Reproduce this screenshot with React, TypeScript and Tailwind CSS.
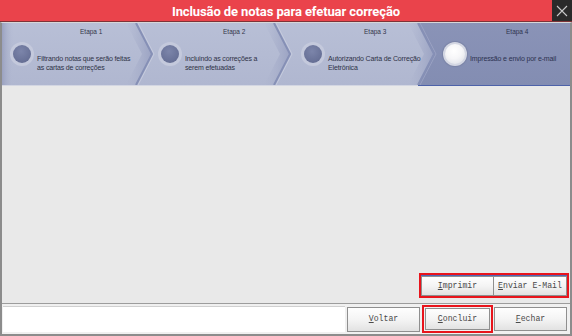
import React from "react";

const steps = [
  {
    label: "Etapa 1",
    lines: ["Filtrando notas que serão feitas", "as cartas de correções"],
    col: "w-[150px]",
    labelPad: "pl-[78px]",
    circlePad: "pl-[8px]",
    active: false,
  },
  {
    label: "Etapa 2",
    lines: ["Incluindo as correções a", "serem efetuadas"],
    col: "w-[138px]",
    labelPad: "pl-[71px]",
    circlePad: "pl-[6px]",
    active: false,
  },
  {
    label: "Etapa 3",
    lines: ["Autorizando Carta de Correção", "Eletrônica"],
    col: "w-[144px]",
    labelPad: "pl-[74px]",
    circlePad: "pl-[11px]",
    active: false,
  },
  {
    label: "Etapa 4",
    lines: ["Impressão e envio por e-mail"],
    col: "w-[136px]",
    labelPad: "pl-[72px]",
    circlePad: "pl-[9px]",
    active: true,
  },
];

function StepsBackground() {
  const chevrons = [
    { t: 134, p: 150 },
    { t: 272, p: 288 },
    { t: 416, p: 432 },
  ];
  return (
    <svg
      className="absolute inset-0"
      width="568"
      height="62"
      viewBox="0 0 568 62"
      preserveAspectRatio="none"
    >
      <defs>
        <linearGradient id="base" x1="0" y1="0" x2="0" y2="1">
          <stop offset="0" stopColor="#b8bfd6" />
          <stop offset="1" stopColor="#b0b7d0" />
        </linearGradient>
        <linearGradient id="leftEdge" x1="0" y1="0" x2="1" y2="0">
          <stop offset="0" stopColor="#9aa1c0" />
          <stop offset="1" stopColor="#b4bbd3" stopOpacity="0" />
        </linearGradient>
        <linearGradient id="shade" x1="0" y1="0" x2="1" y2="0">
          <stop offset="0" stopColor="#a9b0cb" stopOpacity="0" />
          <stop offset="1" stopColor="#9ba3c3" />
        </linearGradient>
        <linearGradient id="dark" x1="0" y1="0" x2="0" y2="1">
          <stop offset="0" stopColor="#8a93b7" />
          <stop offset="1" stopColor="#838db2" />
        </linearGradient>
      </defs>
      <rect x="0" y="0" width="568" height="62" fill="url(#base)" />
      <rect x="0" y="0" width="12" height="62" fill="url(#leftEdge)" />
      <polygon points="416,0 568,0 568,62 416,62 432,31" fill="url(#dark)" />
      {chevrons.map((c, i) => (
        <g key={i}>
          <polygon
            points={`${c.t - 10},0 ${c.t},0 ${c.p},31 ${c.t},62 ${c.t - 10},62 ${c.p - 10},31`}
            fill="url(#shade)"
          />
          <polyline
            points={`${c.t + 2},0 ${c.p + 2},31 ${c.t + 2},62`}
            fill="none"
            stroke={i === 2 ? "#9aa2c3" : "#c6cbdd"}
            strokeWidth="1"
          />
          <polyline
            points={`${c.t},0 ${c.p},31 ${c.t},62`}
            fill="none"
            stroke="#8690b6"
            strokeWidth="2"
          />
        </g>
      ))}
    </svg>
  );
}

function Circle({ active }: { active: boolean }) {
  if (active) {
    return (
      <div className="w-[24px] h-[24px] rounded-full bg-[#d4d7e3] p-[2px] shadow-[0_0_1px_1px_#7a83a6]">
        <div className="w-full h-full rounded-full bg-[radial-gradient(circle_at_45%_35%,#ffffff_0%,#f6f6f8_45%,#d9dbe3_100%)]" />
      </div>
    );
  }
  return (
    <div className="w-[24px] h-[24px] rounded-full bg-[#c4c9dc] p-[3px]">
      <div className="w-full h-full rounded-full bg-[radial-gradient(circle_at_45%_35%,#7c85aa_0%,#6a7399_60%,#5c6589_100%)]" />
    </div>
  );
}

function Btn({
  first,
  rest,
  cls,
}: {
  first: string;
  rest: string;
  cls: string;
}) {
  return (
    <div
      className={`${cls} flex items-center justify-center border border-[#8f8f8f] bg-[linear-gradient(#fefefe_0%,#f4f4f4_50%,#e2e2e2_100%)] text-[8.2px] text-[#4a4a4a] font-['Liberation_Mono',monospace] leading-none`}
    >
      <span>
        <span className="underline underline-offset-1">{first}</span>
        {rest}
      </span>
    </div>
  );
}

export default function App() {
  return (
    <div className="w-[572px] h-[336px] flex flex-col bg-[#f0f0f0] font-['Liberation_Sans',Arial,sans-serif] overflow-hidden">
      {/* Title bar */}
      <div className="h-[22px] flex bg-[#ea434b] border-b border-[#7d3338]">
        <div className="w-[20px]" />
        <div className="flex-1 text-center text-white font-bold text-[13px] leading-[21px] pt-[1px] font-['Roboto',sans-serif] tracking-[-0.1px]">
          Inclusão de notas para efetuar correção
        </div>
        <div className="w-[20px] h-[21px] bg-[#2a2a2a] flex items-center justify-center">
          <svg width="12" height="12" viewBox="0 0 12 12">
            <path d="M1 1 L11 11 M11 1 L1 11" stroke="#c8c8c8" strokeWidth="1.1" />
          </svg>
        </div>
      </div>

      {/* Body with window border */}
      <div className="flex-1 flex flex-col border-x-2 border-b-2 border-[#8c8c8c] border-t border-t-[#d7d7d7]">
        {/* Steps */}
        <div className="relative h-[62px]">
          <StepsBackground />
          <div className="relative flex h-full">
            {steps.map((s) => (
              <div key={s.label} className={`${s.col} flex flex-col`}>
                <div
                  className={`${s.labelPad} pt-[4px] h-[19px] text-[6.5px] leading-[9px] ${s.active ? "text-[#2f3550]" : "text-[#33364a]"} whitespace-nowrap`}
                >
                  {s.label}
                </div>
                <div className={`${s.circlePad} flex items-start`}>
                  <Circle active={s.active} />
                  <div
                    className={`ml-[3px] mt-[12px] text-[7px] leading-[9px] tracking-[-0.15px] whitespace-nowrap ${s.active ? "text-[#2c3150]" : "text-[#2e3146]"}`}
                  >
                    {s.lines.map((l) => (
                      <div key={l}>{l}</div>
                    ))}
                  </div>
                </div>
              </div>
            ))}
          </div>
        </div>
        <div className="flex h-px">
          <div className="w-[416px] bg-[#d3d6e2]" />
          <div className="flex-1 bg-[#4d62a9]" />
        </div>

        {/* Content */}
        <div className="flex-1 bg-[#e9e9e9] flex flex-col justify-end items-end pr-[1px] pb-[5px] border-b border-[#9c9c9c]">
          <div className="border-2 border-[#e8141c] flex">
            <div className="flex border-t border-[#4f66b8]">
              <Btn first="I" rest="mprimir" cls="w-[73px] h-[20px]" />
              <Btn first="E" rest="nviar E-Mail" cls="w-[73px] h-[20px] border-l-0" />
            </div>
          </div>
        </div>

        {/* Bottom bar */}
        <div className="h-[30px] flex items-center pl-[1px]">
          <div className="w-[342px] h-[26px] bg-white border-t border-[#d0d0d0]" />
          <Btn first="V" rest="oltar" cls="ml-[2px] w-[73px] h-[25px]" />
          <div className="ml-[2px] border-2 border-[#e8141c] p-[1px]">
            <Btn first="C" rest="oncluir" cls="w-[65px] h-[22px]" />
          </div>
          <Btn first="F" rest="echar" cls="ml-[1px] w-[73px] h-[24px]" />
        </div>
      </div>
    </div>
  );
}
